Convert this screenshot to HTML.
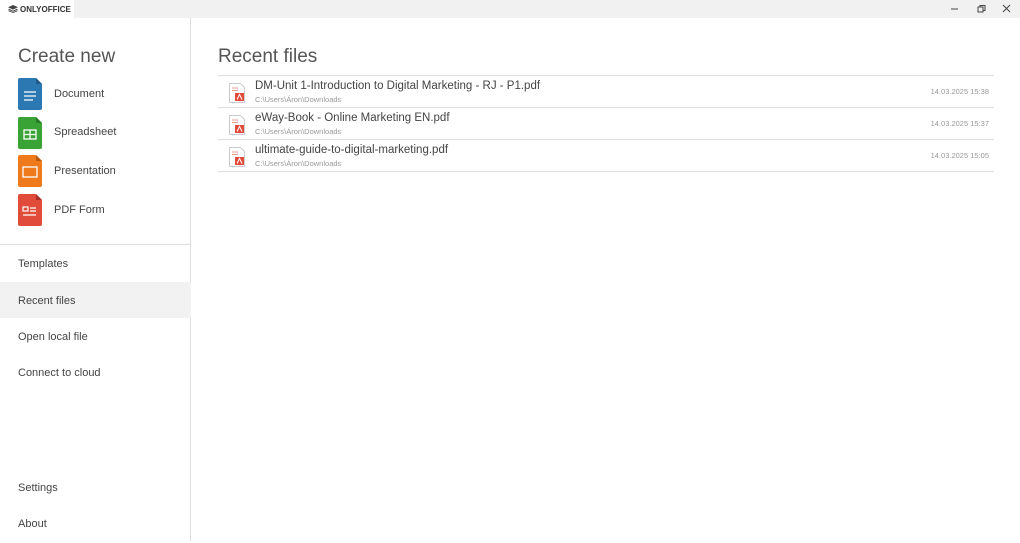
<!DOCTYPE html>
<html><head><meta charset="utf-8"><style>
*{margin:0;padding:0;box-sizing:border-box}
body{width:1020px;height:541px;overflow:hidden;background:#fff;font-family:"Liberation Sans",sans-serif;color:#444;position:relative}
.title{position:absolute;left:0;top:0;width:1020px;height:18px;background:#f1f1f1}
.tab{position:absolute;left:0;top:0;width:74px;height:18px;background:#fff;font-size:8px;font-weight:bold;color:#333;line-height:19px;padding-left:20px}
.side{position:absolute;left:0;top:18px;width:191px;height:523px;border-right:1px solid #ddd}
.h{position:absolute;font-size:19px;color:#555}
.item{position:absolute;left:18px;font-size:11px;color:#444}
.ic{position:absolute;left:18px;width:24px;height:32px}
.nav{position:absolute;left:0;width:191px;height:36px;line-height:38px;padding-left:18px;font-size:11px;color:#444}
.row{position:absolute;left:218px;width:776px;height:32px;border-bottom:1px solid #ddd}
.fn{position:absolute;left:37px;top:4px;font-size:11.5px;color:#444}
.fp{position:absolute;left:37px;top:19px;font-size:7.5px;color:#999}
.dt{position:absolute;right:5px;top:11px;font-size:7.5px;color:#999}
.pi{position:absolute;left:11px;top:7px}
</style></head><body>
<div class="title">
<div class="tab"><svg style="position:absolute;left:8px;top:5px" width="10" height="8" viewBox="0 0 10 8"><path d="M5 0L10 2.3 5 4.6 0 2.3Z" fill="#444"/><path d="M1 3.8L5 5.7 9 3.8 10 4.4 5 6.7 0 4.4Z" fill="#444"/><path d="M1 5.4L5 7.2 9 5.4 10 6 5 8 0 6Z" fill="#444"/></svg>ONLYOFFICE</div>
<svg style="position:absolute;left:948px;top:4px" width="66" height="10"><path d="M3 5h7" stroke="#444"/><rect x="30" y="3" width="5" height="5" fill="none" stroke="#444"/><path d="M32 3V1.5h5v5h-2" fill="none" stroke="#444"/><path d="M55 1l7 7M62 1l-7 7" stroke="#444"/></svg>
</div>
<div class="side">
<div class="h" style="left:18px;top:28px">Create new</div>
<svg class="ic" style="top:60px" viewBox="0 0 24 32"><path d="M2 0h16l6 6v24a2 2 0 0 1-2 2H2a2 2 0 0 1-2-2V2a2 2 0 0 1 2-2z" fill="#2b78b2"/><path d="M18 0l6 6h-6z" fill="#1d5a8a"/><path d="M6 14h12M6 18h12M6 22h9" stroke="#fff" stroke-width="1.3"/></svg>
<div class="item" style="left:54px;top:70px">Document</div>
<svg class="ic" style="top:99px" viewBox="0 0 24 32"><path d="M2 0h16l6 6v24a2 2 0 0 1-2 2H2a2 2 0 0 1-2-2V2a2 2 0 0 1 2-2z" fill="#3aa335"/><path d="M18 0l6 6h-6z" fill="#257a22"/><rect x="6" y="13" width="12" height="9" fill="none" stroke="#fff" stroke-width="1.3"/><path d="M6 17.5h12M12 13v9" stroke="#fff" stroke-width="1.3"/></svg>
<div class="item" style="left:54px;top:108px">Spreadsheet</div>
<svg class="ic" style="top:137px" viewBox="0 0 24 32"><path d="M2 0h16l6 6v24a2 2 0 0 1-2 2H2a2 2 0 0 1-2-2V2a2 2 0 0 1 2-2z" fill="#ee7a1c"/><path d="M18 0l6 6h-6z" fill="#b85a10"/><rect x="5" y="12" width="14" height="10" fill="none" stroke="#fff" stroke-width="1.3"/></svg>
<div class="item" style="left:54px;top:147px">Presentation</div>
<svg class="ic" style="top:176px" viewBox="0 0 24 32"><path d="M2 0h16l6 6v24a2 2 0 0 1-2 2H2a2 2 0 0 1-2-2V2a2 2 0 0 1 2-2z" fill="#e04b3a"/><path d="M18 0l6 6h-6z" fill="#a8322a"/><rect x="5" y="13" width="5" height="4" fill="none" stroke="#fff" stroke-width="1.2"/><path d="M12 14h6M12 17h6M5 21h13" stroke="#fff" stroke-width="1.2"/></svg>
<div class="item" style="left:54px;top:186px">PDF Form</div>
<div style="position:absolute;left:0;top:226px;width:191px;border-top:1px solid #ddd"></div>
<div class="nav" style="top:227px">Templates</div>
<div class="nav" style="top:264px;background:#f2f2f2">Recent files</div>
<div class="nav" style="top:300px">Open local file</div>
<div class="nav" style="top:336px">Connect to cloud</div>
<div class="nav" style="top:451px">Settings</div>
<div class="nav" style="top:487px">About</div>
</div>
<div class="h" style="left:218px;top:46px">Recent files</div>
<div style="position:absolute;left:218px;top:75px;width:776px;border-top:1px solid #ddd"></div>
<div class="row" style="top:76px"><svg class="pi" width="16" height="20" viewBox="0 0 16 20"><path d="M.5.5h11l4 4v15H.5z" fill="#fff" stroke="#ccc"/><path d="M3 5h6M3 7.5h6" stroke="#e8a090"/><rect x="6" y="10" width="9" height="8" fill="#e04b3a"/><path d="M8 16.5l2.5-5 2.5 5" stroke="#fff" fill="none"/></svg><div class="fn">DM-Unit 1-Introduction to Digital Marketing - RJ - P1.pdf</div><div class="fp">C:\Users\Áron\Downloads</div><div class="dt">14.03.2025 15:38</div></div>
<div class="row" style="top:108px"><svg class="pi" width="16" height="20" viewBox="0 0 16 20"><path d="M.5.5h11l4 4v15H.5z" fill="#fff" stroke="#ccc"/><path d="M3 5h6M3 7.5h6" stroke="#e8a090"/><rect x="6" y="10" width="9" height="8" fill="#e04b3a"/><path d="M8 16.5l2.5-5 2.5 5" stroke="#fff" fill="none"/></svg><div class="fn">eWay-Book - Online Marketing EN.pdf</div><div class="fp">C:\Users\Áron\Downloads</div><div class="dt">14.03.2025 15:37</div></div>
<div class="row" style="top:140px"><svg class="pi" width="16" height="20" viewBox="0 0 16 20"><path d="M.5.5h11l4 4v15H.5z" fill="#fff" stroke="#ccc"/><path d="M3 5h6M3 7.5h6" stroke="#e8a090"/><rect x="6" y="10" width="9" height="8" fill="#e04b3a"/><path d="M8 16.5l2.5-5 2.5 5" stroke="#fff" fill="none"/></svg><div class="fn">ultimate-guide-to-digital-marketing.pdf</div><div class="fp">C:\Users\Áron\Downloads</div><div class="dt">14.03.2025 15:05</div></div>
</body></html>
